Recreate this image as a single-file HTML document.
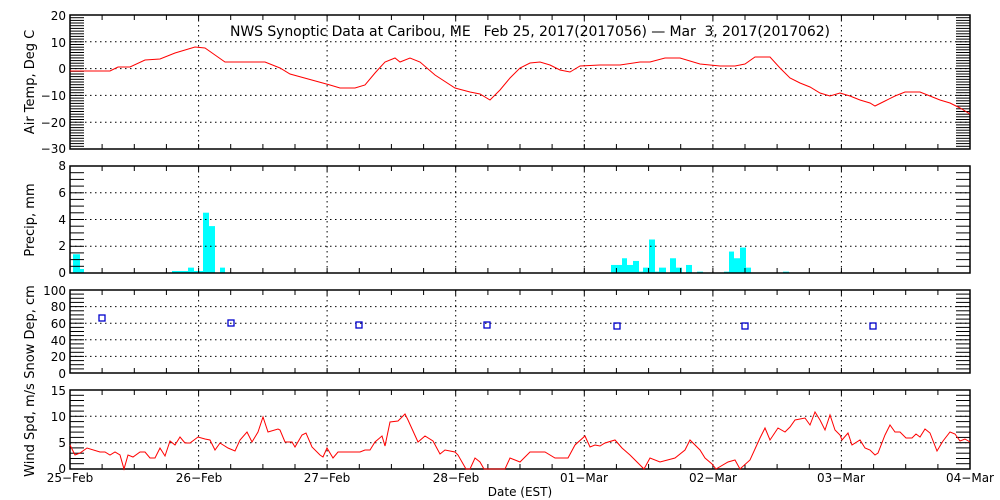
<!DOCTYPE html>
<html><head><meta charset="utf-8"><style>
body{margin:0;background:#fff;width:1000px;height:500px;overflow:hidden}
svg{display:block}
text{font-family:"DejaVu Sans","Liberation Sans",sans-serif;font-size:12px;fill:#000}
</style></head><body>
<svg id="s" width="1000" height="500" xmlns="http://www.w3.org/2000/svg">
<g id="g"></g>
<text x="530" y="36" text-anchor="middle" style="font-size:14px" textLength="600" xml:space="preserve">NWS Synoptic Data at Caribou, ME   Feb 25, 2017(2017056) — Mar  3, 2017(2017062)</text>
<g text-anchor="end">
<text x="66" y="20">20</text><text x="66" y="47">10</text><text x="66" y="73">0</text><text x="66" y="100">−10</text><text x="66" y="127">−20</text><text x="66" y="153">−30</text>
<text x="66" y="170">8</text><text x="66" y="197">6</text><text x="66" y="224">4</text><text x="66" y="250">2</text><text x="66" y="277">0</text>
<text x="66" y="295">100</text><text x="66" y="311">80</text><text x="66" y="328">60</text><text x="66" y="345">40</text><text x="66" y="361">20</text><text x="66" y="378">0</text>
<text x="66" y="395">15</text><text x="66" y="421">10</text><text x="66" y="447">5</text><text x="66" y="473">0</text>
</g>
<g text-anchor="middle">
<text x="70" y="482">25−Feb</text><text x="199" y="482">26−Feb</text><text x="327" y="482">27−Feb</text><text x="456" y="482">28−Feb</text><text x="584" y="482">01−Mar</text><text x="713" y="482">02−Mar</text><text x="841" y="482">03−Mar</text><text x="970" y="482">04−Mar</text>
<text x="520" y="496">Date (EST)</text>
<text transform="translate(34,82) rotate(-90)" style="font-size:13px">Air Temp, Deg C</text>
<text transform="translate(34,220) rotate(-90)" style="font-size:13px">Precip, mm</text>
<text transform="translate(34,332) rotate(-90)" style="font-size:13px">Snow Dep, cm</text>
<text transform="translate(34,430) rotate(-90)" style="font-size:13px">Wind Spd, m/s</text>
</g>
</svg>
<script>
var g=document.getElementById('g'),h='';
var L=70,R=970,D=900/7;
function ln(a,b,c,d,ex){h+='<line x1="'+a+'" y1="'+b+'" x2="'+c+'" y2="'+d+'" stroke="#000" '+(ex||'')+'/>';}
var P=[[15,149,20,-30,10,1],[166,273,8,0,2,0.5],[290,373,100,0,20,5],[390,469,15,0,5,1]];
var bars=[[73,80,1.4],[80,84,0.3],[172,188,0.15],[188,194,0.4],[194,203,0.15],[203,209,4.5],[209,215,3.5],[220,225,0.4],[611,622,0.6],[622,627,1.1],[627,633,0.6],[633,639,0.9],[639,643,0.1],[643,649,0.4],[649,655,2.5],[655,659,0.1],[659,666,0.4],[670,676,1.1],[676,682,0.4],[686,692,0.6],[697,703,0.1],[724,729,0.1],[729,734,1.6],[734,740,1.1],[740,746,1.9],[746,751,0.4],[783,789,0.1]];
bars.forEach(function(b){var y=273-b[2]*13.4;h+='<rect x="'+b[0]+'" y="'+y+'" width="'+(b[1]-b[0])+'" height="'+(273-y)+'" fill="#00ffff"/>';});
P.forEach(function(p){
 var t=p[0],b=p[1],hi=p[2],lo=p[3],mj=p[4],mn=p[5],sc=(b-t)/(hi-lo);
 for(var v=lo+mj;v<hi-0.001;v+=mj){var y=(b-(v-lo)*sc).toFixed(1);ln(L,y,R,y,'stroke-dasharray="1.5 3.5"');}
 for(var i=1;i<7;i++){var x=(L+i*D).toFixed(1);ln(x,t,x,b,'stroke-dasharray="1.5 3.5"');}
 for(var v=lo;v<=hi+0.001;v+=mn){var y=(b-(v-lo)*sc).toFixed(1);ln(L,y,L+14,y);ln(R-14,y,R,y);}
 for(var i=1;i<28;i++){var x=(L+i*D/4).toFixed(1);ln(x,t,x,t+5);ln(x,b,x,b-5);}
 h+='<rect x="'+L+'" y="'+t+'" width="'+(R-L)+'" height="'+(b-t)+'" fill="none" stroke="#000" stroke-width="1.5"/>';
});
var T=[70,71,110,71,118,67,130,67,145,60,160,59,175,53,195,47,205,48,215,55,225,62,265,62,280,68,290,74,330,85,340,88,355,88,365,85,375,73,385,62,395,58,400,62,410,58,420,62,435,75,455,88,470,92,480,94,490,100,500,90,510,78,520,68,530,63,540,62,550,65,560,70,570,72,580,66,600,65,620,65,640,62,650,62,665,58,680,58,700,64,720,66,735,66,745,64,755,57,770,57,780,68,790,78,800,83,810,87,820,93,830,96,840,93,850,96,860,100,870,103,875,106,885,101,895,96,905,92,920,92,930,96,940,100,950,103,960,108,970,114];
var W=[70,445,75,455,80,453,87,448,100,452,105,452,110,455,115,452,120,455,124,469,128,455,133,457,140,452,145,452,150,458,155,458,160,448,165,456,170,441,175,445,180,437,185,443,190,443,198,437,205,439,210,440,215,450,220,443,228,448,235,451,240,440,247,432,252,442,258,432,263,417,268,432,278,429,280,430,285,442,292,442,295,447,302,435,306,433,312,447,320,455,323,457,327,448,333,458,338,452,360,452,365,450,370,450,375,442,382,436,385,446,390,422,398,421,405,414,408,420,418,442,425,436,433,441,440,454,445,450,455,452,458,455,466,469,470,469,475,458,480,462,484,469,505,469,510,458,515,460,520,462,530,452,545,452,555,458,568,458,575,445,585,436,590,447,595,445,600,446,605,443,615,440,622,448,630,455,640,465,644,469,650,458,660,462,675,458,685,450,690,440,700,450,705,458,712,464,716,469,728,462,735,460,740,469,750,460,760,438,765,428,770,440,778,428,785,432,790,427,795,420,805,418,810,425,815,412,820,420,825,430,830,415,835,430,840,435,842,440,848,433,852,445,860,440,865,448,870,450,875,455,878,453,885,435,890,425,895,432,900,432,906,438,912,438,916,434,920,437,925,429,930,433,937,451,943,441,950,432,955,434,960,441,965,439,970,442];
h+='<polyline points="'+T.join(' ')+'" fill="none" stroke="#f00"/>';
h+='<polyline points="'+W.join(' ')+'" fill="none" stroke="#f00"/>';
[[102,318],[231,323],[359,325],[487,325],[617,326],[745,326],[873,326]].forEach(function(p){h+='<rect x="'+(p[0]-3)+'" y="'+(p[1]-3)+'" width="6" height="6" fill="none" stroke="#00c" stroke-width="1.3"/>';});
g.innerHTML=h;
</script>
</body></html>
